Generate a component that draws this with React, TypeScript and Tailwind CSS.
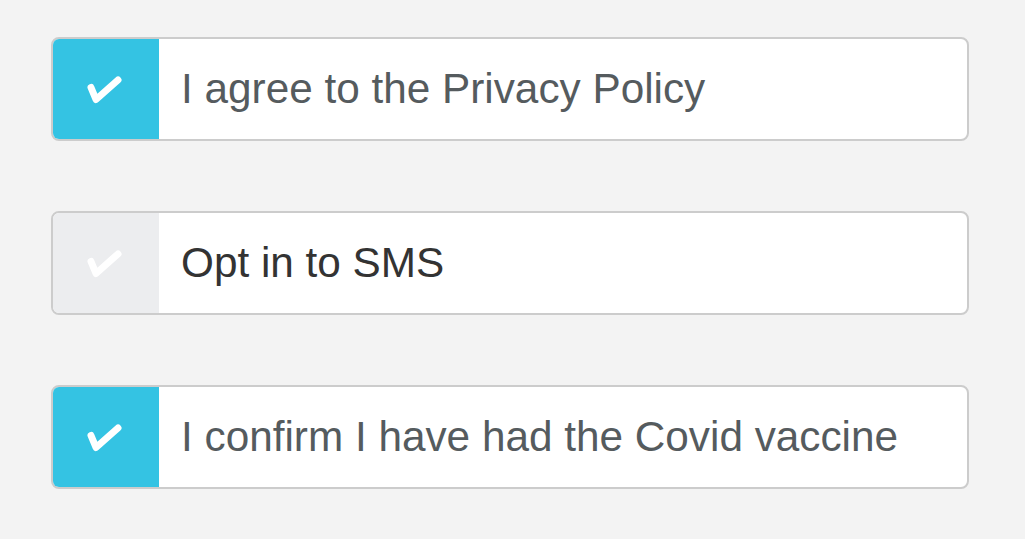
import React, { useState } from 'react';

interface OptionProps {
  label: string;
  checked: boolean;
  onToggle: () => void;
}

const CheckIcon = () => (
  <svg width="36" height="28" viewBox="0 0 36 28" fill="none" className="-ml-[4px] mt-[2px]">
    <path d="M5 11.5 L10 23.5 L32 4" stroke="white" strokeWidth="7" strokeLinecap="round" strokeLinejoin="round" />
  </svg>
);

const Option: React.FC<OptionProps> = ({ label, checked, onToggle }) => (
  <button
    type="button"
    onClick={onToggle}
    className="flex h-[104px] w-full overflow-hidden rounded-lg border-2 border-[#cccccc] bg-white text-left"
  >
    <div className={`flex w-[106px] shrink-0 items-center justify-center ${checked ? 'bg-[#34c3e3]' : 'bg-[#ecedef]'}`}>
      <CheckIcon />
    </div>
    <div
      className={`flex items-center pl-[22px] text-[42.3px] ${checked ? 'text-[#555b5e]' : 'text-[#333333]'}`}
      style={{ fontFamily: '"Liberation Sans", Arial, sans-serif' }}
    >
      {label}
    </div>
  </button>
);

export default function App() {
  const [values, setValues] = useState([true, false, true]);
  const labels = ['I agree to the Privacy Policy', 'Opt in to SMS', 'I confirm I have had the Covid vaccine'];

  const toggle = (i: number) => setValues((v) => v.map((x, j) => (j === i ? !x : x)));

  return (
    <div className="min-h-[539px] w-full bg-[#f3f3f3] pl-[51px] pr-[56px] pt-[37px]">
      <div className="flex flex-col gap-[70px]">
        {labels.map((label, i) => (
          <Option key={label} label={label} checked={values[i]} onToggle={() => toggle(i)} />
        ))}
      </div>
    </div>
  );
}
